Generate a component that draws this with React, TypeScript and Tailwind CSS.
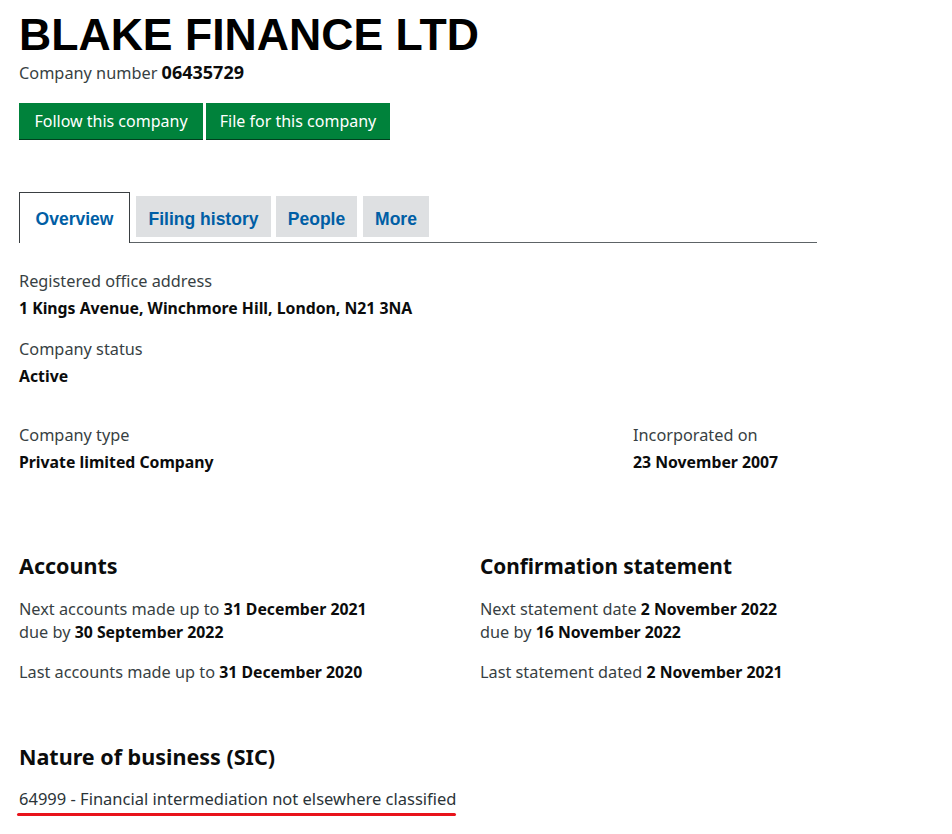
const font = { fontFamily: '"Noto Sans", Lato, sans-serif' };

const Label = ({ children }: { children: React.ReactNode }) => (
  <p className="text-[16.3px] leading-[20px] text-[#383f43]">{children}</p>
);

const Value = ({ children }: { children: React.ReactNode }) => (
  <p className="text-[15.8px] leading-[20px] font-bold text-[#0b0c0c] mt-[7px]">{children}</p>
);

export default function App() {
  return (
    <div className="min-h-screen bg-white pl-[19px] pt-[10px] text-[#0b0c0c]" style={font}>
      <h1 className="font-['Liberation_Sans',Arial,sans-serif] text-[44.6px] leading-[50px] font-bold text-black">
        BLAKE FINANCE LTD
      </h1>
      <p className="leading-[20px] mt-[2px]">
        <span className="text-[16.3px] text-[#383f43]">Company number </span>
        <strong className="text-[18px]">06435729</strong>
      </p>

      <div className="flex gap-[3px] mt-[20px]">
        <button className="w-[184px] h-[36px] bg-[#00823b] text-white text-[16px] shadow-[0_1px_0_#00401e]">
          Follow this company
        </button>
        <button className="w-[184px] h-[36px] bg-[#00823b] text-white text-[16px] shadow-[0_1px_0_#00401e]">
          File for this company
        </button>
      </div>

      <div className="flex items-end w-[798px] mt-[53px] border-b border-[#5d6366] font-['Liberation_Sans',Arial,sans-serif] text-[17.5px] font-bold text-[#005ea5]">
        <div className="w-[111px] h-[51px] -mb-px border border-b-0 border-[#3a3f42] bg-white flex items-center justify-center pt-[2px]">
          Overview
        </div>
        <div className="w-[135px] h-[41px] ml-[6px] mb-[5px] bg-[#dee0e2] flex items-center justify-center pt-[5px]">
          Filing history
        </div>
        <div className="w-[81px] h-[41px] ml-[5px] mb-[5px] bg-[#dee0e2] flex items-center justify-center pt-[5px]">
          People
        </div>
        <div className="w-[66px] h-[41px] ml-[6px] mb-[5px] bg-[#dee0e2] flex items-center justify-center pt-[5px]">
          More
        </div>
      </div>

      <div className="mt-[28px]">
        <Label>Registered office address</Label>
        <Value>1 Kings Avenue, Winchmore Hill, London, N21 3NA</Value>
      </div>
      <div className="mt-[21px]">
        <Label>Company status</Label>
        <Value>Active</Value>
      </div>

      <div className="flex mt-[39px]">
        <div className="w-[614px]">
          <Label>Company type</Label>
          <Value>Private limited Company</Value>
        </div>
        <div>
          <Label>Incorporated on</Label>
          <Value>23 November 2007</Value>
        </div>
      </div>

      <div className="flex mt-[82px]">
        <div className="w-[461px]">
          <h2 className="text-[21.5px] leading-[24px] font-bold">Accounts</h2>
          <p className="leading-[23px] mt-[20px]">
            <span className="text-[16.3px] text-[#383f43]">Next accounts made up to </span>
            <strong className="text-[15.8px]">31 December 2021</strong>
            <br />
            <span className="text-[16.3px] text-[#383f43]">due by </span>
            <strong className="text-[15.8px]">30 September 2022</strong>
          </p>
          <p className="leading-[23px] mt-[17px]">
            <span className="text-[16.3px] text-[#383f43]">Last accounts made up to </span>
            <strong className="text-[15.8px]">31 December 2020</strong>
          </p>
        </div>
        <div>
          <h2 className="text-[20.8px] leading-[24px] font-bold">Confirmation statement</h2>
          <p className="leading-[23px] mt-[20px]">
            <span className="text-[16.3px] text-[#383f43]">Next statement date </span>
            <strong className="text-[15.8px]">2 November 2022</strong>
            <br />
            <span className="text-[16.3px] text-[#383f43]">due by </span>
            <strong className="text-[15.8px]">16 November 2022</strong>
          </p>
          <p className="leading-[23px] mt-[17px]">
            <span className="text-[16.3px] text-[#383f43]">Last statement dated </span>
            <strong className="text-[15.8px]">2 November 2021</strong>
          </p>
        </div>
      </div>

      <h2 className="text-[21.5px] leading-[24px] font-bold mt-[61px]">Nature of business (SIC)</h2>
      <div className="inline-block mt-[20px]">
        <p className="text-[16.5px] leading-[20px] text-[#2b3438]">
          64999 - Financial intermediation not elsewhere classified
        </p>
        <div className="h-[3px] mt-[4px] -ml-[2px] w-[calc(100%+2px)] rounded-full bg-[#e8131b]" />
      </div>
    </div>
  );
}
